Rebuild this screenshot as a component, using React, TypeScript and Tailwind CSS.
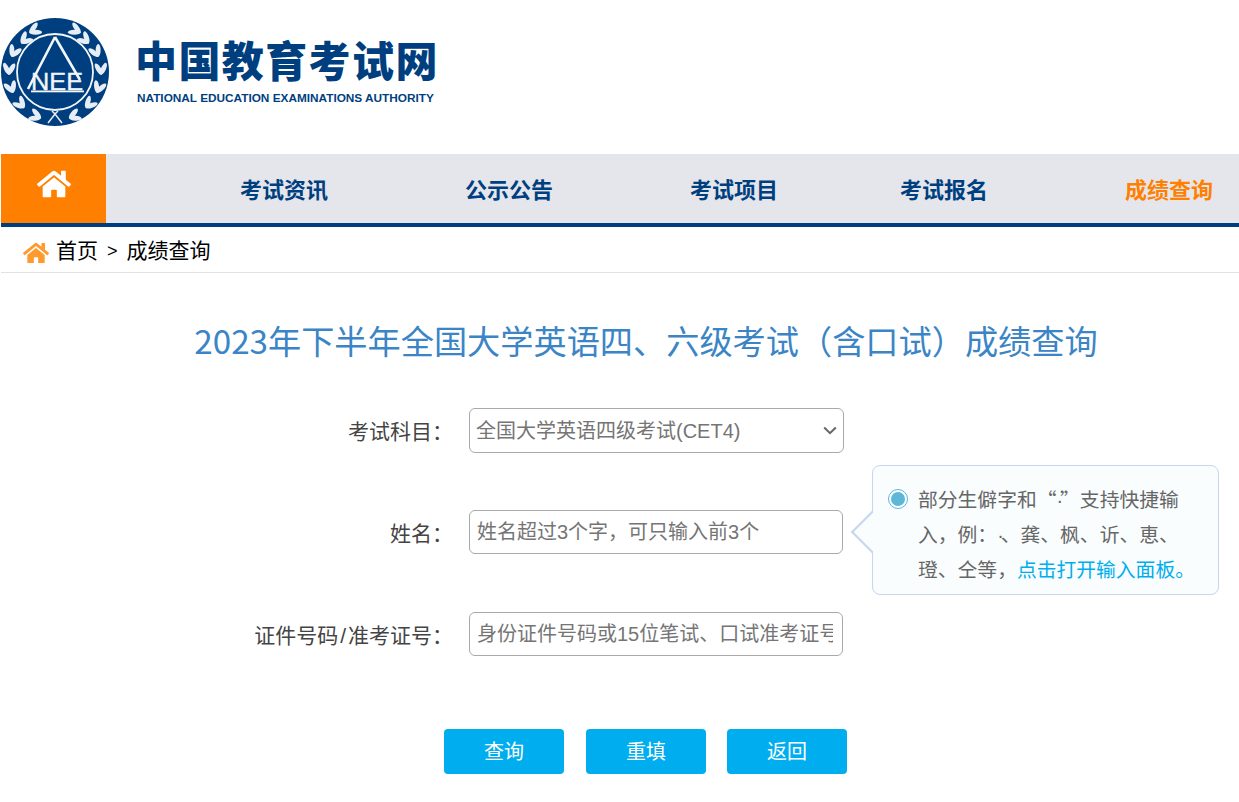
import React from "react";
import { FaHome } from "react-icons/fa";

const FONT = "font-['Liberation_Sans','Noto_Sans_CJK_SC',sans-serif]";

const LEAF_SPOTS = [
  [-20, -41],
  [-29, -32],
  [-40, -20],
  [-45, -3],
  [-43, 15],
  [-34, 31],
  [-19, 43],
];

function Logo() {
  return (
    <svg width="108" height="108" viewBox="0 0 108 108" className="shrink-0">
      <circle cx="54" cy="54" r="54" fill="#003f7f" />
      <circle cx="54" cy="54" r="38" fill="none" stroke="#f2f6fa" strokeWidth="1.8" />
      {LEAF_SPOTS.flatMap(([x, y], i) => {
        const tangent = (Math.atan2(y, x) * 180) / Math.PI + 90;
        const len = Math.hypot(x, y);
        const ux = x / len;
        const uy = y / len;
        return [
          { x: x + ux * 3.5, y: y + uy * 3.5, r: tangent - 28, k: `o${i}` },
          { x: x - ux * 1.5, y: y - uy * 1.5, r: tangent + 26, k: `i${i}` },
        ];
      }).map((l) => (
        <g key={l.k} fill="#e6edf5">
          <ellipse cx={54 + l.x} cy={54 + l.y} rx="6.4" ry="2.5" transform={`rotate(${l.r} ${54 + l.x} ${54 + l.y})`} />
          <ellipse cx={54 - l.x} cy={54 + l.y} rx="6.4" ry="2.5" transform={`rotate(${-l.r} ${54 - l.x} ${54 + l.y})`} />
        </g>
      ))}
      <path d="M47 105l7-9 7 9M54 96l-3-3M54 96l3-3" fill="none" stroke="#e6edf5" strokeWidth="1.5" />
      <path d="M54 19 L79 62 M54 19 L27 71" fill="none" stroke="#f2f6fa" strokeWidth="2.6" />
      <text x="56" y="71.5" textAnchor="middle" fontSize="23" fontFamily="Liberation Sans" fill="#f2f6fa" stroke="#f2f6fa" strokeWidth="0.35" textLength="52" lengthAdjust="spacingAndGlyphs">NEE</text>
      <rect x="30" y="72.5" width="53" height="1.8" fill="#f2f6fa" />
    </svg>
  );
}

function Header() {
  return (
    <header className="h-[154px] flex items-start pt-[18px] pl-px">
      <Logo />
      <div className="ml-[27px] mt-[23px] text-[#003f7f]">
        <div className="-ml-px text-[42px] leading-[44px] font-black tracking-[1.4px] whitespace-nowrap">中国教育考试网</div>
        <div className="ml-px mt-[7px] text-[11.8px] leading-[13px] font-bold whitespace-nowrap">NATIONAL EDUCATION EXAMINATIONS AUTHORITY</div>
      </div>
    </header>
  );
}

function Nav() {
  return (
    <nav className="ml-px h-[73px] bg-[#e5e6eb] border-b-4 border-[#003f7f] flex items-stretch text-[22px] font-bold text-[#003f7f] whitespace-nowrap">
      <a className="w-[105px] bg-[#ff8000] flex justify-center pt-[13px] text-white"><FaHome size={34} /></a>
      <div className="flex items-center pt-[3px]">
        <a className="ml-[134px] w-[225px]">考试资讯</a>
        <a className="w-[225px]">公示公告</a>
        <a className="w-[210px]">考试项目</a>
        <a className="w-[225px]">考试报名</a>
        <a className="text-[#ff8000]">成绩查询</a>
      </div>
    </nav>
  );
}

function Breadcrumb() {
  return (
    <div className="ml-px h-[46px] border-b border-[#e2e2e2] flex items-center pl-[22px] pt-[3px] text-[21px] text-black whitespace-nowrap">
      <span className="h-[23px] overflow-hidden"><FaHome size={26} className="text-[#ff9a2e]" /></span>
      <span className="ml-[7px]">首页</span>
      <span className="mx-[9px] text-[18px]">&gt;</span>
      <span>成绩查询</span>
    </div>
  );
}

function Row({ label, children, className }: { label: React.ReactNode; children: React.ReactNode; className?: string }) {
  return (
    <div className={`flex items-center ${className ?? ""}`}>
      <label className="w-[453px] pt-[3px] text-right text-[21px] text-[#444] whitespace-nowrap [text-spacing-trim:space-all]">{label}</label>
      <div className="ml-[16px]">{children}</div>
    </div>
  );
}

const inputCls =
  "block w-[374px] h-[44px] rounded-md border border-[#a9a9a9] pl-[7px] pr-[9px] text-[20px] bg-white text-[#757575] placeholder:text-[#757575] outline-none";

const Dot = () => <span className="font-['Liberation_Sans'] leading-none tracking-[-3px]">·</span>;

export default function App() {
  return (
    <div className={`${FONT} w-[1239px] h-[802px] overflow-hidden bg-white`}>
      <Header />
      <Nav />
      <Breadcrumb />
      <h1 className="mt-[44px] pl-[53px] h-[46px] text-center text-[33.2px] leading-[46px] font-normal text-[#3b85c6] font-['Noto_Sans_CJK_SC',sans-serif] whitespace-nowrap">
        2023年下半年全国大学英语四、六级考试（含口试）成绩查询
      </h1>
      <form className="relative mt-[45px]">
        <Row label="考试科目：">
          <div className="relative">
            <select className="block w-[375px] h-[45px] appearance-none rounded-md border border-[#a9a9a9] pl-[6px] text-[20px] bg-white text-[#757575] outline-none" defaultValue="cet4">
              <option value="cet4">全国大学英语四级考试(CET4)</option>
              <option value="cet6">全国大学英语六级考试(CET6)</option>
            </select>
            <svg width="14" height="9" viewBox="0 0 14 9" className="absolute left-[354px] top-[18px] pointer-events-none">
              <path d="M1.2 1.5 7 7.2l5.8-5.7" fill="none" stroke="#666" strokeWidth="2" />
            </svg>
          </div>
        </Row>
        <Row label="姓名：" className="mt-[57px]">
          <input className={inputCls} placeholder="姓名超过3个字，可只输入前3个" />
        </Row>
        <Row label={<>证件号码<span className="mx-[2px]">/</span>准考证号：</>} className="mt-[58px]">
          <input className={inputCls} placeholder="身份证件号码或15位笔试、口试准考证号" />
        </Row>

        <div className="absolute left-[872px] top-[57px] w-[347px] h-[130px] rounded-lg border border-[#c5d6ee] bg-[#f9fdfe] pl-[45px] pt-[15px] text-[19.8px] leading-[35px] text-[#666] whitespace-nowrap font-['Noto_Sans_CJK_SC',sans-serif] [text-spacing-trim:space-all]">
          <span className="absolute -left-[16px] top-[51px] w-[30px] h-[30px] rotate-45 border-l-2 border-b-2 border-[#c5d6ee] bg-[#f9fdfe]" />
          <span className="absolute left-[15px] top-[23px] w-[20px] h-[20px] rounded-full border border-[#5cb7d9] bg-white flex items-center justify-center">
            <span className="block w-[14px] h-[14px] rounded-full bg-[#5cb7d9]" />
          </span>
          <span className="relative">
            部分生僻字和“<Dot />”支持快捷输<br />
            入，例：<Dot />、龚、枫、䜣、恵、<br />
            璒、仝等，<a className="text-[#00aeef]">点击打开输入面板。</a>
          </span>
        </div>

        <div className="mt-[73px] ml-[444px] flex text-[20px] text-white">
          <button type="button" className="w-[120px] h-[45px] rounded bg-[#00aeef]">查询</button>
          <button type="button" className="ml-[22px] w-[120px] h-[45px] rounded bg-[#00aeef]">重填</button>
          <button type="button" className="ml-[21px] w-[120px] h-[45px] rounded bg-[#00aeef]">返回</button>
        </div>
      </form>
    </div>
  );
}
